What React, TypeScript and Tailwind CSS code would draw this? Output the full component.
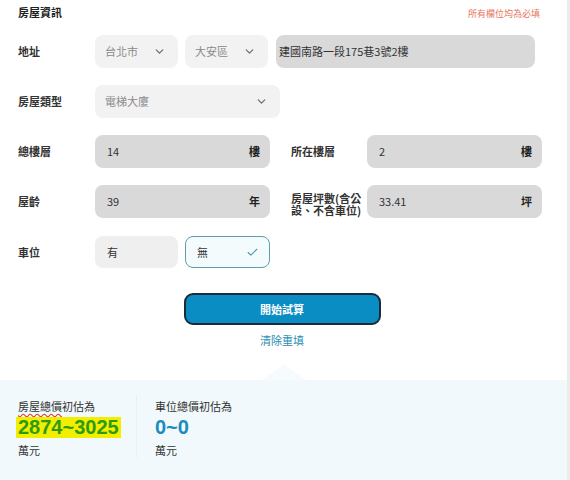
import { Check } from 'lucide-react';

const font = { fontFamily: '"Noto Sans CJK TC", "Noto Sans", sans-serif' };

function Chevron() {
  return (
    <svg width="13" height="13" viewBox="0 0 24 24" fill="none" stroke="#6f6f6f" strokeWidth="2.4" strokeLinecap="round" strokeLinejoin="round" className="shrink-0 block">
      <polyline points="6 9 12 15 18 9" />
    </svg>
  );
}

function Select({ value, width }: { value: string; width: string }) {
  return (
    <div className={`relative shrink-0 h-[33px] rounded-[8px] bg-[#f2f2f2] flex items-center pl-[10px] text-[11px] text-[#8a8a8a] ${width}`}>
      <span>{value}</span>
      <span className="absolute right-[12px] top-[10px]">
        <Chevron />
      </span>
    </div>
  );
}

function Field({ value, unit }: { value: string; unit: string }) {
  return (
    <div className="shrink-0 w-[175px] h-[33px] rounded-[8px] bg-[#d9d9da] flex items-center justify-between pl-[12px] pr-[10px] text-[11px] text-[#333]">
      <span>{value}</span>
      <span className="font-bold text-[#222]">{unit}</span>
    </div>
  );
}

export default function App() {
  return (
    <div style={font} className="w-[570px] h-[480px] bg-white border-r-[3px] border-[#ececec] overflow-hidden flex flex-col">
      <div className="flex-1 relative">
        <div className="flex items-center justify-between pl-[18px] pr-[27px] pt-[2px] h-[22px]">
          <h2 className="text-[11px] font-bold text-[#222]">房屋資訊</h2>
          <span className="text-[9px] text-[#e8755e] mt-[4px]">所有欄位均為必填</span>
        </div>

        <div className="pl-[18px] mt-[13px] flex flex-col gap-[17px]">
          <div className="flex items-center gap-[7px]">
            <span className="shrink-0 w-[70px] text-[11px] font-semibold text-[#333]">地址</span>
            <Select value="台北市" width="w-[83px]" />
            <Select value="大安區" width="w-[83px]" />
            <div className="shrink-0 ml-[1px] w-[259px] h-[33px] rounded-[8px] bg-[#d9d9da] flex items-center pl-[3px] text-[11px] text-[#333]">
              建國南路一段175巷3號2樓
            </div>
          </div>

          <div className="flex items-center">
            <span className="shrink-0 w-[77px] text-[11px] font-semibold text-[#333]">房屋類型</span>
            <Select value="電梯大廈" width="w-[185px]" />
          </div>

          <div className="flex items-center">
            <span className="shrink-0 w-[77px] text-[11px] font-semibold text-[#333]">總樓層</span>
            <Field value="14" unit="樓" />
            <span className="shrink-0 w-[97px] pl-[21px] text-[11px] font-semibold text-[#333]">所在樓層</span>
            <Field value="2" unit="樓" />
          </div>

          <div className="flex items-center">
            <span className="shrink-0 w-[77px] text-[11px] font-semibold text-[#333]">屋齡</span>
            <Field value="39" unit="年" />
            <div className="shrink-0 w-[97px] pl-[21px]">
              <span className="block w-[74px] text-[11px] leading-[12px] font-semibold text-[#333] mt-[4px]">房屋坪數(含公設、不含車位)</span>
            </div>
            <Field value="33.41" unit="坪" />
          </div>

          <div className="flex items-center mt-[1px]">
            <span className="shrink-0 w-[77px] text-[11px] font-semibold text-[#333]">車位</span>
            <div className="shrink-0 w-[83px] h-[32px] rounded-[8px] bg-[#efefef] flex items-center pl-[12px] text-[11px] text-[#333]">有</div>
            <div className="shrink-0 ml-[7px] w-[85px] h-[32px] rounded-[8px] border border-[#5e9cab] bg-[#f4fbfc] flex items-center justify-between pl-[11px] pr-[10px] text-[11px] text-[#333]">
              <span>無</span>
              <Check className="w-[13px] h-[13px] text-[#4a9ab0]" strokeWidth={2} />
            </div>
          </div>
        </div>

        <div className="flex flex-col items-center mt-[25px] pr-[3px]">
          <button className="w-[197px] h-[32px] rounded-[9px] bg-[#0a8dc2] border-2 border-[#1c2b3a] text-white text-[11px] font-bold">
            開始試算
          </button>
          <span className="mt-[7px] text-[11px] text-[#2a8db3]">清除重填</span>
        </div>

        <div className="absolute left-1/2 bottom-0 -translate-x-1/2 w-0 h-0 border-l-[22px] border-r-[22px] border-b-[16px] border-l-transparent border-r-transparent border-b-[#f6fbfd]" />
      </div>

      <div className="h-[100px] bg-[#f1f9fc] flex pl-[18px] pt-[18px]">
        <div className="w-[118px] flex flex-col">
          <span className="text-[11px] text-[#333]">
            <span className="underline decoration-wavy decoration-[#e03030] underline-offset-2">房屋總價</span>初估為
          </span>
          <span className="mt-[2px] -ml-[2px] self-start bg-[#f2ee00] px-[2px] text-[20px] leading-[21px] font-bold text-[#2e9a12]" style={{ fontFamily: '"Liberation Sans", Arial, sans-serif' }}>
            2874~3025
          </span>
          <span className="mt-[4px] text-[11px] text-[#333]">萬元</span>
        </div>
        <div className="w-0 h-[62px] border-l border-dotted border-[#e2eaee] mt-[-2px]" />
        <div className="pl-[18px] flex flex-col">
          <span className="text-[11px] text-[#333]">車位總價初估為</span>
          <span className="mt-[2px] text-[20px] leading-[21px] font-bold text-[#1a8cbb]" style={{ fontFamily: '"Liberation Sans", Arial, sans-serif' }}>
            0~0
          </span>
          <span className="mt-[4px] text-[11px] text-[#333]">萬元</span>
        </div>
      </div>
    </div>
  );
}
